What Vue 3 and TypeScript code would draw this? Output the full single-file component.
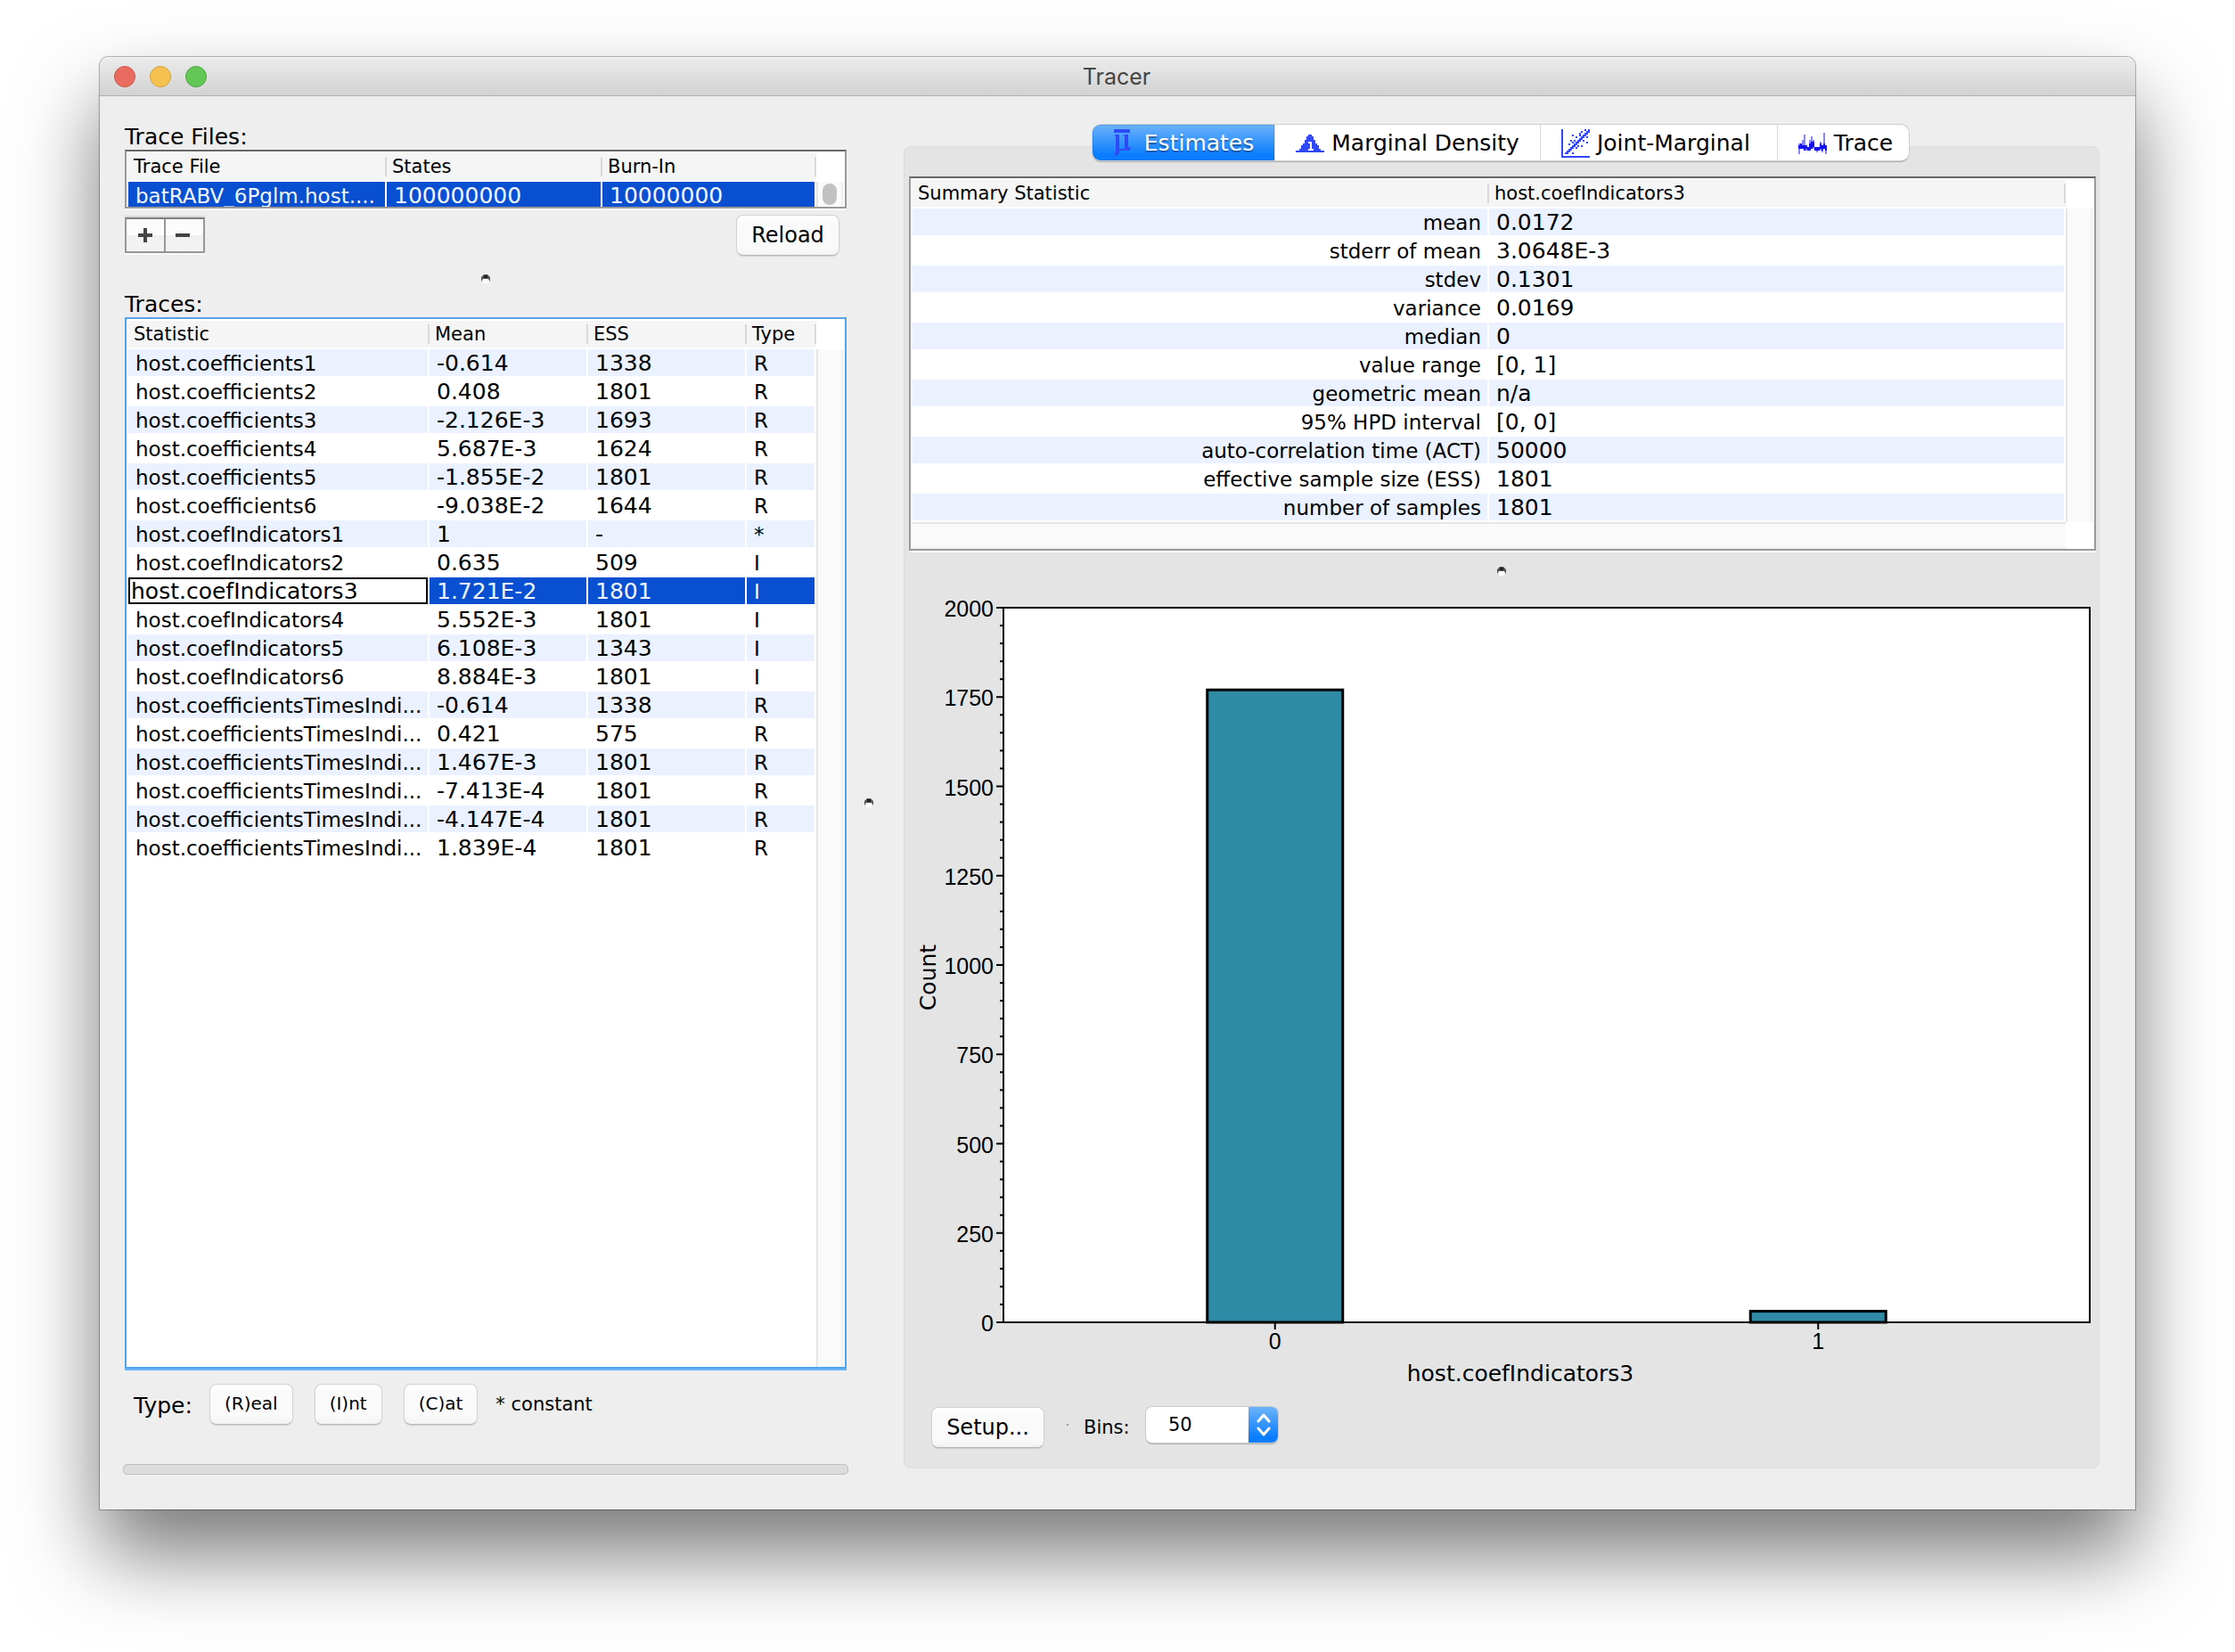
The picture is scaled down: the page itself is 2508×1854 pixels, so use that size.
<script setup lang="ts">
import { ref } from 'vue'

interface Trace {
  name: string
  mean: string
  ess: string
  type: string
}

const traces: Trace[] = [
  { name: 'host.coefficients1', mean: '-0.614', ess: '1338', type: 'R' },
  { name: 'host.coefficients2', mean: '0.408', ess: '1801', type: 'R' },
  { name: 'host.coefficients3', mean: '-2.126E-3', ess: '1693', type: 'R' },
  { name: 'host.coefficients4', mean: '5.687E-3', ess: '1624', type: 'R' },
  { name: 'host.coefficients5', mean: '-1.855E-2', ess: '1801', type: 'R' },
  { name: 'host.coefficients6', mean: '-9.038E-2', ess: '1644', type: 'R' },
  { name: 'host.coefIndicators1', mean: '1', ess: '-', type: '*' },
  { name: 'host.coefIndicators2', mean: '0.635', ess: '509', type: 'I' },
  { name: 'host.coefIndicators3', mean: '1.721E-2', ess: '1801', type: 'I' },
  { name: 'host.coefIndicators4', mean: '5.552E-3', ess: '1801', type: 'I' },
  { name: 'host.coefIndicators5', mean: '6.108E-3', ess: '1343', type: 'I' },
  { name: 'host.coefIndicators6', mean: '8.884E-3', ess: '1801', type: 'I' },
  { name: 'host.coefficientsTimesIndi...', mean: '-0.614', ess: '1338', type: 'R' },
  { name: 'host.coefficientsTimesIndi...', mean: '0.421', ess: '575', type: 'R' },
  { name: 'host.coefficientsTimesIndi...', mean: '1.467E-3', ess: '1801', type: 'R' },
  { name: 'host.coefficientsTimesIndi...', mean: '-7.413E-4', ess: '1801', type: 'R' },
  { name: 'host.coefficientsTimesIndi...', mean: '-4.147E-4', ess: '1801', type: 'R' },
  { name: 'host.coefficientsTimesIndi...', mean: '1.839E-4', ess: '1801', type: 'R' },
]

const selected = 8
const editedName = ref(traces[selected].name)

const summary: [string, string][] = [
  ['mean', '0.0172'],
  ['stderr of mean', '3.0648E-3'],
  ['stdev', '0.1301'],
  ['variance', '0.0169'],
  ['median', '0'],
  ['value range', '[0, 1]'],
  ['geometric mean', 'n/a'],
  ['95% HPD interval', '[0, 0]'],
  ['auto-correlation time (ACT)', '50000'],
  ['effective sample size (ESS)', '1801'],
  ['number of samples', '1801'],
]

const bins = ref('50')

// Chart geometry, in viewBox units
const plot = { left: 106, top: 22, width: 1219, height: 802 }
const maxCount = 2000
const yOf = (v: number) => plot.top + plot.height * (1 - v / maxCount)
const xOf = (v: number) => plot.left + plot.width * (0.25 + v * 0.5)

const majorTicks = Array.from({ length: 9 }, (_, i) => i * 250)
const minorTicks = Array.from({ length: 41 }, (_, i) => i * 50).filter((v) => v % 250 !== 0)
const barWidth = 152
const bars = [
  { value: 0, count: 1770 },
  { value: 1, count: 31 },
]
</script>

<template>
  <div class="desktop">
    <main class="window">
      <header class="titlebar">
        <div class="lights">
          <button class="light close" aria-label="Close"></button>
          <button class="light minimise" aria-label="Minimise"></button>
          <button class="light zoom" aria-label="Zoom"></button>
        </div>
        <h1>Tracer</h1>
      </header>

      <div class="content">
        <section class="left">
          <h2>Trace Files:</h2>
          <div class="box files">
            <table>
              <colgroup>
                <col />
                <col class="c-states" />
                <col class="c-burn" />
              </colgroup>
              <thead>
                <tr><th>Trace File</th><th>States</th><th>Burn-In</th></tr>
              </thead>
              <tbody>
                <tr class="selected">
                  <td>batRABV_6Pglm.host....</td>
                  <td class="num">100000000</td>
                  <td class="num">10000000</td>
                </tr>
              </tbody>
            </table>
            <div class="gutter"><span class="thumb"></span></div>
          </div>

          <div class="file-actions">
            <div class="plusminus">
              <button aria-label="Add">
                <svg width="16" height="16" viewBox="0 0 16 16"><path d="M6 0h4v6h6v4h-6v6H6v-6H0V6h6z" fill="#444" /></svg>
              </button>
              <button aria-label="Remove">
                <svg width="16" height="16" viewBox="0 0 16 16"><path d="M0 6h16v4H0z" fill="#444" /></svg>
              </button>
            </div>
            <button class="push reload">Reload</button>
          </div>

          <div class="split-h">
            <svg width="10" height="10" viewBox="0 0 10 10"><path d="M2 5h6v5H2z" fill="#fff" /><path d="M0 8V3l3-3h4l3 3v5L8 5H2z" fill="#555" /><path d="M3 1h4v3H3z" fill="#222" /></svg>
          </div>

          <h2>Traces:</h2>
          <div class="box traces">
            <table>
              <colgroup>
                <col />
                <col class="c-num" />
                <col class="c-num" />
                <col class="c-type" />
              </colgroup>
              <thead>
                <tr><th>Statistic</th><th>Mean</th><th>ESS</th><th>Type</th></tr>
              </thead>
              <tbody>
                <tr v-for="(t, i) in traces" :key="i" :class="{ selected: i === selected }">
                  <td v-if="i === selected" class="editing">
                    <input v-model="editedName" type="text" aria-label="Statistic name" />
                  </td>
                  <td v-else>{{ t.name }}</td>
                  <td class="num">{{ t.mean }}</td>
                  <td class="num">{{ t.ess }}</td>
                  <td>{{ t.type }}</td>
                </tr>
              </tbody>
            </table>
            <div class="gutter"></div>
          </div>

          <div class="types">
            <span class="types-label">Type:</span>
            <button class="push small">(R)eal</button>
            <button class="push small">(I)nt</button>
            <button class="push small">(C)at</button>
            <span class="constant">* constant</span>
          </div>
          <div class="progress" role="progressbar" aria-label="Progress"></div>
        </section>

        <div class="split-v">
          <svg width="10" height="10" viewBox="0 0 10 10"><path d="M2 5h6v5H2z" fill="#fff" /><path d="M0 8V3l3-3h4l3 3v5L8 5H2z" fill="#555" /><path d="M3 1h4v3H3z" fill="#222" /></svg>
        </div>

        <section class="right">
          <nav class="tabs" role="tablist">
            <button class="tab active" role="tab" aria-selected="true">
              <svg class="icon" viewBox="0 0 16 16" shape-rendering="crispEdges">
                <g fill="#2f4bf5">
                  <path d="M3 0h9v2H3z" />
                  <path d="M4 3h2v8h3V3h2v7h1v2H6v2H5v1H4z" />
                </g>
                <path d="M3 13h1v2H3zM5 13h1v1H5zM12 10h1v1h-1zM3 3h1v1H3zM8 3h1v1H8z" fill="#2f4bf5" opacity=".45" />
              </svg>
              Estimates
            </button>
            <button class="tab" role="tab" aria-selected="false">
              <svg class="icon" viewBox="0 0 16 16" shape-rendering="crispEdges">
                <path d="M7 3h2v1h1v2h1v2h1v1h1v2h1v1h2v1H0v-1h2v-1h1V9h1V8h1V6h1V4h1z" fill="#3048fa" />
                <path d="M7 7h2v4h1v1H7v-1h1V8H7z" fill="#fff" />
              </svg>
              Marginal Density
            </button>
            <button class="tab joint" role="tab" aria-selected="false">
              <svg class="icon" viewBox="0 0 16 16" shape-rendering="crispEdges">
                <g fill="#3048fa">
                  <path d="M0 0h1v15h15v1H0z" />
                  <path d="M2 13h2v1H2zM3 12h2v1H3zM4 11h2v1H4zM5 10h2v1H5zM6 9h2v1H6zM7 8h2v1H7zM8 7h2v1H8zM9 6h2v1H9zM10 5h2v1h-2zM11 4h2v1h-2zM12 3h2v1h-2zM13 2h2v1h-2zM14 1h2v1h-2zM15 0h1v1h-1z" />
                  <path d="M6 3h1v1H6zM5 6h1v1H5zM4 8h1v1H4zM7 6h1v1H7zM8 4h1v1H8zM10 2h1v1h-1zM11 1h1v1h-1zM13 0h1v1h-1zM10 3h1v1h-1zM6 7h1v1H6zM14 4h1v1h-1zM12 6h1v1h-1zM14 7h1v1h-1zM9 9h1v1H9zM11 9h1v1h-1zM8 10h1v1H8zM6 13h1v1H6z" />
                </g>
              </svg>
              Joint-Marginal
            </button>
            <button class="tab" role="tab" aria-selected="false">
              <svg class="icon" viewBox="0 0 16 16" shape-rendering="crispEdges">
                <path d="M0 8h1v6H0zM3 3h1v6H3zM2 6h1v3H2zM7 4h1v5H7zM8 6h1v5H8zM14 2h1v8h-1zM12 7h1v5h-1zM10 10h1v3h-1zM6 6h1v6H6zM4 10h1v2H4zM15 9h1v5h-1zM5 11h1v1H5zM13 10h1v3h-1z" fill="#8a86f0" />
                <path d="M1 8h1v3H1zM2 9h1v2H2zM3 9h1v3H3zM4 9h1v2H4zM5 10h1v2H5zM6 8h1v4H6zM7 7h1v4H7zM8 7h1v3H8zM9 10h1v2H9zM10 10h1v2h-1zM11 10h1v2h-1zM12 8h1v3h-1zM13 9h1v3h-1zM14 8h1v3h-1zM15 9h1v3h-1zM0 9h1v2H0z" fill="#1410ee" />
              </svg>
              Trace
            </button>
          </nav>

          <div class="panel">
            <div class="box summary">
              <div class="pane">
                <table>
                  <colgroup>
                    <col class="c-half" />
                    <col />
                  </colgroup>
                  <thead>
                    <tr><th>Summary Statistic</th><th>host.coefIndicators3</th></tr>
                  </thead>
                  <tbody>
                    <tr v-for="[label, value] in summary" :key="label">
                      <td class="label">{{ label }}</td>
                      <td class="num">{{ value }}</td>
                    </tr>
                  </tbody>
                </table>
                <div class="gutter"></div>
              </div>
              <div class="hscroll"></div>
            </div>

            <div class="split-h inner">
              <svg width="10" height="10" viewBox="0 0 10 10"><path d="M2 5h6v5H2z" fill="#fff" /><path d="M0 8V3l3-3h4l3 3v5L8 5H2z" fill="#555" /><path d="M3 1h4v3H3z" fill="#222" /></svg>
            </div>

            <svg class="chart" viewBox="0 0 1332 916" role="img" aria-label="Histogram of host.coefIndicators3">
              <rect :x="plot.left" :y="plot.top" :width="plot.width" :height="plot.height" fill="#fff" />
              <rect
                v-for="b in bars"
                :key="b.value"
                :x="xOf(b.value) - barWidth / 2"
                :y="yOf(b.count)"
                :width="barWidth"
                :height="yOf(0) - yOf(b.count)"
                fill="#2e8aa5"
                stroke="#000"
                stroke-width="3"
              />
              <rect :x="plot.left" :y="plot.top" :width="plot.width" :height="plot.height" fill="none" stroke="#000" stroke-width="2" />
              <g stroke="#000" stroke-width="2">
                <line v-for="v in majorTicks" :key="v" :x1="plot.left - 8" :x2="plot.left" :y1="yOf(v)" :y2="yOf(v)" />
                <line v-for="v in minorTicks" :key="v" :x1="plot.left - 4" :x2="plot.left" :y1="yOf(v)" :y2="yOf(v)" />
                <line v-for="b in bars" :key="b.value" :x1="xOf(b.value)" :x2="xOf(b.value)" :y1="yOf(0)" :y2="yOf(0) + 8" />
              </g>
              <g class="ticks">
                <text v-for="v in majorTicks" :key="v" :x="plot.left - 11" :y="yOf(v) + 10" text-anchor="end">{{ v }}</text>
                <text v-for="b in bars" :key="b.value" :x="xOf(b.value)" :y="yOf(0) + 30" text-anchor="middle">{{ b.value }}</text>
              </g>
              <text class="axis" x="686" y="890" text-anchor="middle">host.coefIndicators3</text>
              <text class="axis" transform="translate(30 437) rotate(-90)" text-anchor="middle">Count</text>
            </svg>

            <div class="controls">
              <button class="push setup">Setup...</button>
              <i class="speck"></i>
              <label for="bins">Bins:</label>
              <div class="combo">
                <select id="bins" v-model="bins">
                  <option>50</option>
                </select>
                <span class="stepper">
                  <svg width="16" height="32" viewBox="0 0 16 32" fill="none" stroke="#fff" stroke-width="3" stroke-linecap="round" stroke-linejoin="round">
                    <path d="M2 12l6-7 6 7M2 20l6 7 6-7" />
                  </svg>
                </span>
              </div>
            </div>
          </div>
        </section>
      </div>
    </main>
  </div>
</template>

<style>
body {
  background: #fff;
}
</style>

<style scoped>
* {
  box-sizing: border-box;
}

.desktop {
  display: flex;
  min-height: 100vh;
  padding: 64px 112px 160px;
  font-family: 'DejaVu Sans', Verdana, sans-serif;
  color: #000;
}

.window {
  flex: 1;
  display: flex;
  flex-direction: column;
  min-width: 0;
  background: #eee;
  border-radius: 10px 10px 0 0;
  box-shadow: 0 0 1px 1px rgba(0, 0, 0, 0.3), 0 50px 92px rgba(0, 0, 0, 0.53);
}

button,
input,
select {
  font-family: inherit;
  color: inherit;
  margin: 0;
  padding: 0;
}

button {
  border: 0;
}

.titlebar {
  display: grid;
  grid-template-columns: 1fr auto 1fr;
  align-items: center;
  height: 44px;
  padding: 0 18px 0 16px;
  background: linear-gradient(#ececec, #d2d2d2);
  border-bottom: 1px solid #b1b1b1;
  border-radius: 10px 10px 0 0;
  box-shadow: inset 0 1px 0 #f6f6f6;
}

.titlebar h1 {
  margin: 0;
  padding-top: 1px;
  font: 400 25px/32px Inter, sans-serif;
  color: #454545;
}

.lights {
  display: flex;
  gap: 16px;
}

.light {
  width: 24px;
  height: 24px;
  border-radius: 50%;
  border: 1px solid;
}

.close {
  background: #ea6b5f;
  border-color: #d05548;
}

.minimise {
  background: #f5c251;
  border-color: #d6a03c;
}

.zoom {
  background: #63c755;
  border-color: #4fa73f;
}

.content {
  flex: 1;
  display: flex;
  padding: 28px 40px 39px 28px;
}

.left {
  flex: 810 1 0;
  min-width: 0;
  display: flex;
  flex-direction: column;
}

.right {
  flex: 1342 1 0;
  min-width: 0;
  display: flex;
  flex-direction: column;
  padding: 4px 0 7px;
}

h2 {
  margin: 0;
  padding-top: 4px;
  font-size: 25px;
  font-weight: 400;
  line-height: 28px;
}

/* Sunken list boxes */
.box {
  display: flex;
  background: #fff;
  border: 2px solid #999;
  border-top-color: #666;
  padding: 2px 0 0 2px;
}

.files {
  height: 66px;
  overflow: hidden;
  box-shadow: 0 2px 0 #fff;
}

.traces {
  flex: 1;
  border-color: #54a3e6;
  box-shadow: 0 2px 0 #66b6fc;
}

table {
  flex: 1;
  align-self: flex-start;
  min-width: 0;
  table-layout: fixed;
  border-collapse: separate;
  border-spacing: 0;
}

th,
td {
  height: 32px;
  overflow: hidden;
  border-bottom: 2px solid #fff;
  background-clip: padding-box;
  text-align: left;
  white-space: nowrap;
  font-weight: 400;
}

th {
  padding: 0 0 0 6px;
  font-size: 21px;
  line-height: 30px;
  background: linear-gradient(#d9d9d9, #d9d9d9) right 4px / 2px 22px no-repeat padding-box, #f5f5f5 padding-box;
}

td {
  padding: 2px 0 0 8px;
  border-right: 2px solid #fff;
  font-size: 23px;
  line-height: 28px;
}

td.num {
  font-size: 25px;
}

tbody tr:nth-child(odd) td {
  background-color: #ebf1fe;
}

tbody tr.selected td {
  background-color: #084fd1;
  color: #f2f7ff;
}

td.editing {
  padding: 0;
}

td.editing input {
  display: block;
  width: 100%;
  height: 30px;
  padding: 0 0 0 1px;
  border: 2px solid #000;
  background: #fff;
  color: #000;
  font-size: 25px;
  line-height: 26px;
  outline: 0;
}

td.label {
  padding: 2px 7px 0 0;
  text-align: right;
}

.c-states {
  width: 242px;
}

.c-burn {
  width: 240px;
}

.c-num {
  width: 178px;
}

.c-type {
  width: 78px;
}

.c-half {
  width: 50%;
}

.gutter {
  flex: none;
  display: flex;
  justify-content: center;
  width: 30px;
  margin: 32px 2px 0 0;
  border-left: 2px solid #e5e5e5;
  border-right: 2px solid #eee;
  background: #fafafa;
}

.thumb {
  width: 16px;
  height: 24px;
  margin-top: 2px;
  border-radius: 8px;
  background: #c1c1c1;
}

.file-actions {
  display: flex;
  justify-content: space-between;
  align-items: flex-start;
  height: 46px;
  margin-top: 7px;
  padding-right: 8px;
}

.plusminus {
  display: flex;
  margin-top: 3px;
  border: 2px solid #979797;
  border-top-color: #808080;
  box-shadow: 0 -2px 0 #d9d9d9, 0 2px 0 #f8f8f8;
}

.plusminus button {
  display: flex;
  align-items: center;
  justify-content: center;
  width: 42px;
  height: 36px;
  background: linear-gradient(#fcfcfc 50%, #f0f0f0 50%, #f4f4f4);
}

.plusminus button + button {
  width: 44px;
  padding-right: 4px;
  border-left: 2px solid #979797;
}

.push {
  height: 46px;
  border: 1px solid #d2d2d2;
  border-bottom-color: #b8b8b8;
  border-radius: 8px;
  background: linear-gradient(#fff, #fafafa 20%, #fafafa 80%, #f3f3f3);
  box-shadow: 0 1px 1px rgba(0, 0, 0, 0.12);
  font-size: 24px;
}

.reload {
  width: 116px;
}

.split-h {
  display: flex;
  justify-content: center;
  align-items: flex-start;
  height: 37px;
  padding-top: 21px;
}

.split-h svg,
.split-v svg {
  display: block;
}

.split-h.inner {
  height: 42px;
  padding-top: 18px;
  padding-right: 2px;
}

.split-v {
  flex: none;
  display: flex;
  align-items: center;
  justify-content: center;
  width: 50px;
  margin-right: 14px;
  padding-top: 11px;
}

.types {
  display: flex;
  align-items: center;
  height: 46px;
  margin-top: 17px;
  padding-left: 10px;
}

.types-label {
  width: 85px;
  padding-top: 2px;
  font-size: 25px;
}

.push.small {
  margin-right: 24px;
  padding: 0 16px 3px;
  font-size: 20px;
}

.constant {
  margin-left: -4px;
  font-size: 21px;
}

.progress {
  height: 12px;
  margin: 44px -2px 0;
  border: 1px solid #bdbdbd;
  border-radius: 5px;
  background: #dcdcdc;
}

.tabs {
  z-index: 1;
  display: flex;
  align-self: center;
  height: 40px;
  margin: 0 2px -16px 0;
  border-radius: 9px;
  background: #fff;
  box-shadow: 0 0 0 1px #cfcfcf, 0 2px 1px rgba(0, 0, 0, 0.25);
}

.tab {
  display: flex;
  align-items: center;
  gap: 8px;
  padding: 1px 23px 0;
  border-left: 1px solid #d8d8d8;
  background: transparent;
  font-size: 25px;
  line-height: 38px;
  white-space: nowrap;
}

.tab.joint {
  padding-right: 30px;
}

.tab:last-child {
  padding-right: 18px;
}

.tab.active {
  padding-left: 18px;
  border: 0;
  border-radius: 9px 0 0 9px;
  background: linear-gradient(#6cb3fa, #0a7dff 85%);
  box-shadow: inset 0 0 0 1px rgba(0, 90, 220, 0.25);
  color: #fff;
  text-shadow: 0 2px 1px rgba(0, 0, 0, 0.35);
}

.icon {
  flex: none;
  width: 32px;
  height: 32px;
}

.panel {
  flex: 1;
  padding: 33px 3px 22px 5px;
  border: 1px solid #dcdcdc;
  border-radius: 8px;
  background: #e4e4e4;
}

.summary {
  flex-direction: column;
  box-shadow: 0 2px 0 #fff;
}

.pane {
  display: flex;
}

.hscroll {
  height: 30px;
  margin-right: 32px;
  border-top: 2px solid #e5e5e5;
  border-bottom: 2px solid #eee;
  background: #fafafa;
}

.chart {
  display: block;
  width: 100%;
}

.ticks {
  font: 25px 'Liberation Sans', Arial, sans-serif;
}

.axis {
  font-size: 25px;
}

.controls {
  display: flex;
  align-items: flex-start;
  margin-top: 3px;
  padding-left: 25px;
}

.push.setup {
  width: 127px;
}

.speck {
  width: 2px;
  height: 2px;
  margin: 19px 17px 0 25px;
  background: #999;
}

.controls label {
  width: 70px;
  font-size: 21px;
  line-height: 46px;
}

.combo {
  display: grid;
  grid-template-columns: 115px 33px;
  height: 40px;
  border-radius: 7px;
  box-shadow: 0 0 0 1px #c9c9c9, 0 2px 1px rgba(0, 0, 0, 0.25);
}

.combo select {
  grid-area: 1 / 1 / 2 / 3;
  appearance: none;
  padding: 0 0 1px 25px;
  border: 0;
  border-radius: 7px;
  background: #fff;
  font-size: 21px;
}

.stepper {
  grid-area: 1 / 2;
  display: flex;
  align-items: center;
  justify-content: center;
  border-radius: 0 7px 7px 0;
  background: linear-gradient(#6cb3fa, #0a7dff 85%);
  pointer-events: none;
}
</style>
